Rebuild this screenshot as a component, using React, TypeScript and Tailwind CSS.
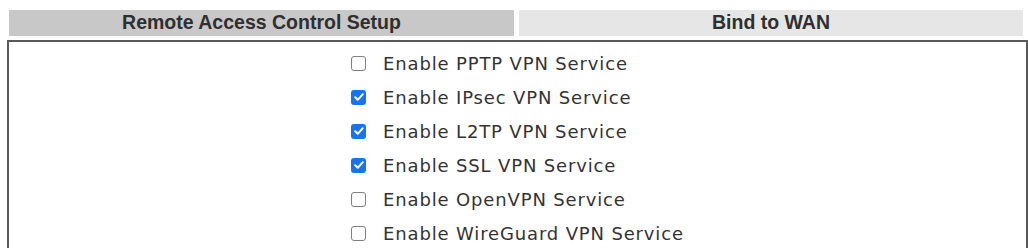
const services = [
  { label: 'Enable PPTP VPN Service', checked: false },
  { label: 'Enable IPsec VPN Service', checked: true },
  { label: 'Enable L2TP VPN Service', checked: true },
  { label: 'Enable SSL VPN Service', checked: true },
  { label: 'Enable OpenVPN Service', checked: false },
  { label: 'Enable WireGuard VPN Service', checked: false },
]

function Box({ checked }: { checked: boolean }) {
  if (checked) {
    return (
      <span className="flex h-[15px] w-[15px] shrink-0 items-center justify-center rounded-[3px] bg-[#1a73e8]">
        <svg viewBox="0 0 12 12" className="h-[12px] w-[12px]">
          <path d="M2.2 6.3 L4.8 8.8 L9.8 3.2" fill="none" stroke="white" strokeWidth="2" strokeLinecap="round" strokeLinejoin="round" />
        </svg>
      </span>
    )
  }
  return <span className="h-[15px] w-[15px] shrink-0 rounded-[3px] border border-[#808080] bg-white" />
}

export default function App() {
  return (
    <div className="h-[248px] w-[1028px] overflow-hidden bg-white pt-[10px]">
      <div className="flex gap-[5px] pl-[9px] pr-[5px] font-['Liberation_Sans',Arial,sans-serif] text-[19.5px] font-bold text-[#2f2f2f]">
        <div className="flex h-[26px] w-[505px] items-center justify-center bg-[#c8c8c8]">Remote Access Control Setup</div>
        <div className="flex h-[26px] flex-1 items-center justify-center bg-[#e6e6e6]">Bind to WAN</div>
      </div>
      <div className="ml-[7px] mt-[4px] flex h-[210px] w-[1021px] justify-center border-2 border-b-0 border-[#5a5a5a] pt-[4px]">
        <div className="flex flex-col font-['DejaVu_Sans',Verdana,sans-serif] text-[18px] text-[#333]">
          {services.map((s) => (
            <label key={s.label} className="flex h-[34px] items-center gap-[17px]">
              <Box checked={s.checked} />
              <span className="tracking-[0.85px]">{s.label}</span>
            </label>
          ))}
        </div>
      </div>
    </div>
  )
}
